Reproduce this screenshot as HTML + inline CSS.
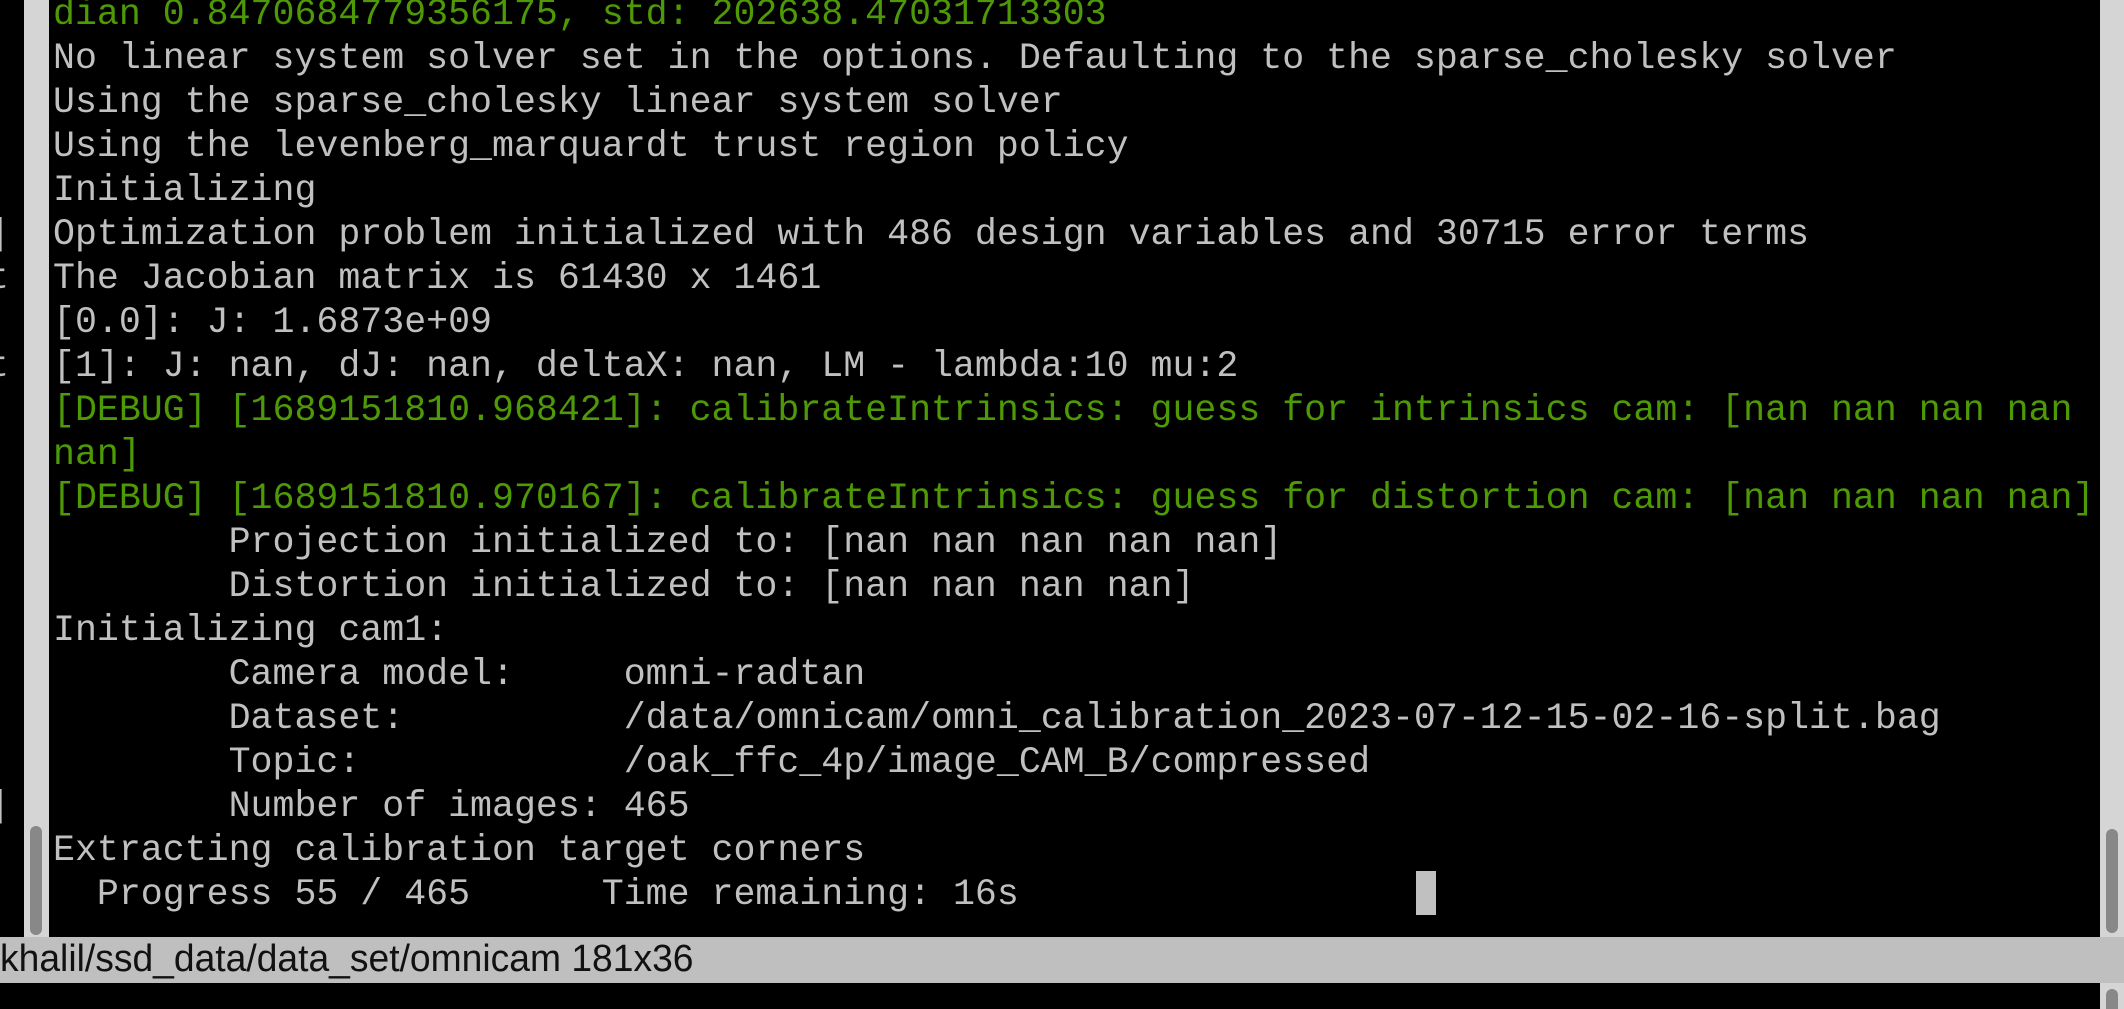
<!DOCTYPE html>
<html><head><meta charset="utf-8"><style>
html,body{margin:0;padding:0;background:#000;width:2124px;height:1009px;overflow:hidden;position:relative}
.strip{position:absolute;background:#d5d5d5}
.thumb{position:absolute;background:#888;border-radius:7px}
pre{position:absolute;margin:0;font-family:"Liberation Mono",monospace;font-size:36.6px;line-height:44px;color:#c0c0c0;white-space:pre}
.g{color:#4e9a06}
.status{position:absolute;left:0;top:937px;width:2124px;height:46px;background:#c0bfbf}
.status span{position:absolute;left:0;top:1px;font-family:"Liberation Sans",sans-serif;font-size:38px;color:#111;white-space:pre;transform-origin:0 0;transform:scaleX(0.98)}
.cur{position:absolute;left:1416px;top:871px;width:20px;height:44px;background:#c0c0c0}
</style></head><body>
<div class="strip" style="left:24px;top:0;width:25px;height:937px"></div>
<div class="thumb" style="left:30px;top:826px;width:12px;height:109px"></div>
<div class="strip" style="left:2100px;top:0;width:24px;height:1009px"></div>
<div class="thumb" style="left:2106px;top:829px;width:12px;height:104px"></div>
<div class="thumb" style="left:2106px;top:989px;width:12px;height:40px"></div>
<pre style="left:-13px;top:-7px">





]
t

t









]</pre>
<pre style="left:53px;top:-7px"><span class="g">dian 0.8470684779356175, std: 202638.47031713303</span>
No linear system solver set in the options. Defaulting to the sparse_cholesky solver
Using the sparse_cholesky linear system solver
Using the levenberg_marquardt trust region policy
Initializing
Optimization problem initialized with 486 design variables and 30715 error terms
The Jacobian matrix is 61430 x 1461
[0.0]: J: 1.6873e+09
[1]: J: nan, dJ: nan, deltaX: nan, LM - lambda:10 mu:2
<span class="g">[DEBUG] [1689151810.968421]: calibrateIntrinsics: guess for intrinsics cam: [nan nan nan nan
nan]
[DEBUG] [1689151810.970167]: calibrateIntrinsics: guess for distortion cam: [nan nan nan nan]</span>
        Projection initialized to: [nan nan nan nan nan]
        Distortion initialized to: [nan nan nan nan]
Initializing cam1:
        Camera model:     omni-radtan
        Dataset:          /data/omnicam/omni_calibration_2023-07-12-15-02-16-split.bag
        Topic:            /oak_ffc_4p/image_CAM_B/compressed
        Number of images: 465
Extracting calibration target corners
  Progress 55 / 465      Time remaining: 16s</pre>
<div class="cur"></div>
<div class="status"><span>khalil/ssd_data/data_set/omnicam 181x36</span></div>
</body></html>
